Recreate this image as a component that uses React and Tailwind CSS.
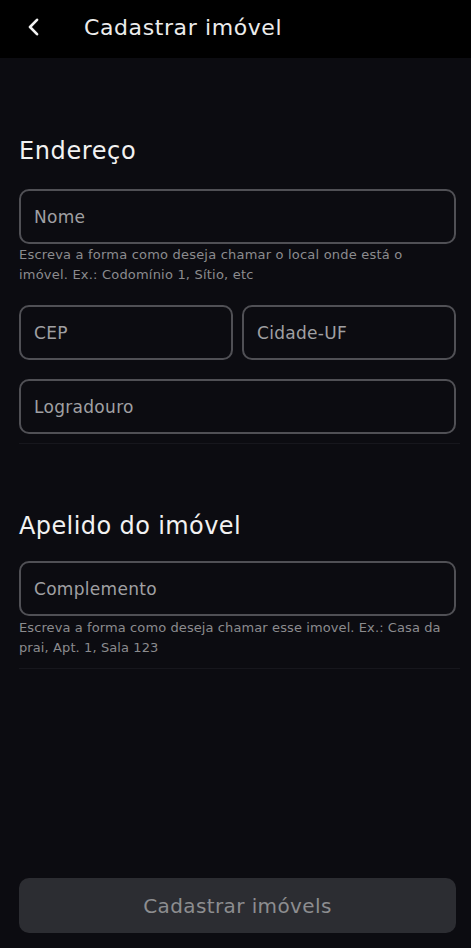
import { useState } from 'react';

function Campo({ placeholder, name, value, onChange, className = '' }) {
  return (
    <input
      type="text"
      name={name}
      value={value}
      onChange={onChange}
      placeholder={placeholder}
      className={`h-[55px] w-full rounded-[10px] border-2 border-[#505055] bg-transparent px-[13px] text-[17px] tracking-[0.3px] text-[#d0d0d0] outline-none placeholder:text-[#a0a0a3] ${className}`}
    />
  );
}

export default function App() {
  const [form, setForm] = useState({
    nome: '',
    cep: '',
    cidade: '',
    logradouro: '',
    complemento: '',
  });

  const handleChange = e => {
    const { name, value } = e.target;
    setForm(prev => ({ ...prev, [name]: value }));
  };

  return (
    <div className="flex min-h-[948px] flex-col bg-[#0c0c11] font-['DejaVu_Sans',sans-serif]">
      {/* cabeçalho */}
      <header className="flex h-[58px] items-center bg-black pb-[4px]">
        <button className="ml-[27px] flex h-[20px] w-[13px] items-center justify-center text-white">
          <svg width="13" height="18" viewBox="0 0 13 18" fill="none">
            <path d="M10 1.8L3 9l7 7.2" stroke="#f2f2f2" strokeWidth="2.6" strokeLinecap="round" strokeLinejoin="round" />
          </svg>
        </button>
        <h1 className="ml-[44px] text-[22px] tracking-[0.6px] text-[#ececec]">Cadastrar imóvel</h1>
      </header>

      <main className="flex flex-1 flex-col pl-[19px] pr-[15px]">
        <section className="pt-[77px]">
          <h2 className="text-[24px] leading-[32px] tracking-[0.6px] text-[#f2f2f2]">Endereço</h2>
          <div className="mt-[22px]">
            <Campo placeholder="Nome" name="nome" value={form.nome} onChange={handleChange} />
            <p className="mt-[1px] text-[13px] leading-[20px] tracking-[0.2px] text-[#8b8b8e]">
              Escreva a forma como deseja chamar o local onde está o
              <br />
              imóvel. Ex.: Codomínio 1, Sítio, etc
            </p>
          </div>
          <div className="mt-[20px] flex gap-[9px]">
            <Campo placeholder="CEP" name="cep" value={form.cep} onChange={handleChange} />
            <Campo placeholder="Cidade-UF" name="cidade" value={form.cidade} onChange={handleChange} />
          </div>
          <div className="mt-[19px]">
            <Campo placeholder="Logradouro" name="logradouro" value={form.logradouro} onChange={handleChange} />
          </div>
          <div className="mt-[9px] mr-[-4px] h-px bg-[#17171d]" />
        </section>

        <section className="pt-[66px]">
          <h2 className="text-[24px] leading-[32px] tracking-[0.4px] text-[#f2f2f2]">Apelido do imóvel</h2>
          <div className="mt-[19px]">
            <Campo placeholder="Complemento" name="complemento" value={form.complemento} onChange={handleChange} />
            <p className="mt-[2px] text-[13px] leading-[20px] tracking-[0.1px] text-[#8b8b8e]">
              Escreva a forma como deseja chamar esse imovel. Ex.: Casa da
              <br />
              prai, Apt. 1, Sala 123
            </p>
          </div>
          <div className="mt-[10px] mr-[-4px] h-px bg-[#17171d]" />
        </section>

        <div className="mt-auto pb-[15px]">
          <button
            type="button"
            disabled
            className="h-[55px] w-full rounded-[10px] bg-[#2c2d32] text-[20px] tracking-[0.4px] text-[#8d8d90]"
          >
            Cadastrar imóvels
          </button>
        </div>
      </main>
    </div>
  );
}
